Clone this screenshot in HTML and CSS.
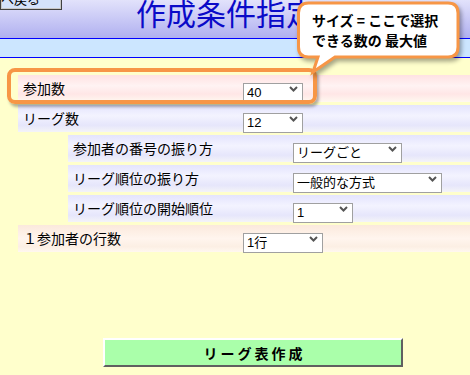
FILE: index.html
```html
<!DOCTYPE html>
<html lang="ja">
<head>
    <meta charset="UTF-8">
    <meta name="viewport" content="width=device-width, initial-scale=1.0">
    <title>作成条件指定</title>
    <link rel="stylesheet" href="styles.css">
</head>
<body>
    <div class="header">
        <button class="back">へ戻る</button>
        <h1 class="title">作成条件指定</h1>
    </div>
    <div class="subbar"></div>

    <div class="form">
        <div class="row pink">
            <div class="label">参加数</div>
            <div class="sel w60">
                <select><option>40</option></select>
                <svg class="chev" width="9" height="6" viewBox="0 0 9 6"><path d="M1 1 L4.5 4.5 L8 1" fill="none" stroke="#555" stroke-width="2"/></svg>
            </div>
        </div>
        <div class="row lav">
            <div class="label">リーグ数</div>
            <div class="sel w60">
                <select><option>12</option></select>
                <svg class="chev" width="9" height="6" viewBox="0 0 9 6"><path d="M1 1 L4.5 4.5 L8 1" fill="none" stroke="#555" stroke-width="2"/></svg>
            </div>
        </div>
        <div class="row lav sub">
            <div class="label">参加者の番号の振り方</div>
            <div class="sel w109">
                <select><option>リーグごと</option></select>
                <svg class="chev" width="9" height="6" viewBox="0 0 9 6"><path d="M1 1 L4.5 4.5 L8 1" fill="none" stroke="#555" stroke-width="2"/></svg>
            </div>
        </div>
        <div class="row lav sub">
            <div class="label">リーグ順位の振り方</div>
            <div class="sel w149">
                <select><option>一般的な方式</option></select>
                <svg class="chev" width="9" height="6" viewBox="0 0 9 6"><path d="M1 1 L4.5 4.5 L8 1" fill="none" stroke="#555" stroke-width="2"/></svg>
            </div>
        </div>
        <div class="row lav sub">
            <div class="label">リーグ順位の開始順位</div>
            <div class="sel w60">
                <select><option>1</option></select>
                <svg class="chev" width="9" height="6" viewBox="0 0 9 6"><path d="M1 1 L4.5 4.5 L8 1" fill="none" stroke="#555" stroke-width="2"/></svg>
            </div>
        </div>
        <div class="row peach">
            <div class="label">１参加者の行数</div>
            <div class="sel w80">
                <select><option>1行</option></select>
                <svg class="chev" width="9" height="6" viewBox="0 0 9 6"><path d="M1 1 L4.5 4.5 L8 1" fill="none" stroke="#555" stroke-width="2"/></svg>
            </div>
        </div>
    </div>

    <div class="actions">
        <button class="make">リーグ表作成</button>
    </div>

    <!-- 吹き出しと強調枠 -->
    <div class="highlight"></div>
    <div class="bubble">
        <svg width="180" height="80" viewBox="0 0 180 80">
            <path d="M18.5 3 H158 Q168 3 168 13 V47 Q168 57 158 57 H45 L23 72 L28 57 H18.5 Q8.5 57 8.5 47 V13 Q8.5 3 18.5 3 Z" fill="#fff" stroke="#f79646" stroke-width="3"/>
        </svg>
        <div class="bubble-text">サイズ = ここで選択<br>できる数の 最大値</div>
    </div>
</body>
</html>
```

FILE: styles.css
```css
* {
    box-sizing: border-box;
}

body {
    margin: 0;
    background-color: #ffffcc;
    font-family: "Noto Sans CJK JP", sans-serif;
    color: #000;
    overflow: hidden;
}

.header {
    height: 39px;
    display: flex;
    align-items: flex-start;
    background: linear-gradient(to bottom, #e2e2fb, #b0b0f0);
    border-bottom: 1px solid #0000ff;
}

.back {
    width: 62px;
    height: 22px;
    margin-top: -12px;
    padding: 0;
    text-align: left;
    font-family: "Noto Sans CJK JP", sans-serif;
    font-size: 13px;
    line-height: 18px;
    background: #d4e2fb;
    border: 1px solid #404040;
    box-shadow: inset 0 0 0 1px #c8c8c8;
    color: #000;
}

.title {
    margin: -3px 0 0 74px;
    font-size: 30px;
    line-height: 30px;
    font-weight: normal;
    color: #0a0ac8;
}

.subbar {
    height: 19px;
    background: #cce6ff;
    border-bottom: 1px solid #0000ff;
}

.form {
    padding: 17px 0 0 18px;
    display: flex;
    flex-direction: column;
    gap: 3px;
}

.row {
    height: 27px;
    display: flex;
    align-items: center;
}

.row.sub {
    margin-left: 50px;
}

.pink {
    background: linear-gradient(to bottom, #ffe2e2 0%, #fff3f3 40%, #ffe6e6 70%, #fff8f0 100%);
}

.lav {
    background: linear-gradient(to bottom, #e4e4fd 0%, #f3f3ff 40%, #e6e6fb 75%, #f4f4f8 100%);
}

.peach {
    background: linear-gradient(to bottom, #fbe9dc 0%, #fff5ee 50%, #fcefe4 80%, #fff8f0 100%);
}

.label {
    width: 225px;
    padding: 0 0 2px 5px;
    font-size: 14px;
    line-height: 20px;
}

.sel {
    position: relative;
    height: 20px;
    margin-bottom: 1px;
}

.sel select {
    appearance: none;
    -webkit-appearance: none;
    width: 100%;
    height: 20px;
    margin: 0;
    padding: 0 0 0 3px;
    border: 1px solid #a0a0a0;
    border-radius: 0;
    background: #fff;
    color: #000;
    font-family: "Liberation Sans", "Noto Sans CJK JP", sans-serif;
    font-size: 13px;
    line-height: 18px;
}

.chev {
    position: absolute;
    right: 5px;
    top: 8px;
    pointer-events: none;
}

.w60 { width: 60px; }
.w80 { width: 80px; }
.w109 { width: 109px; }
.w149 { width: 149px; }

.actions {
    padding: 86px 0 0 103px;
}

.make {
    width: 300px;
    height: 29px;
    background: #aaffaa;
    border: 2px solid;
    border-color: #ffffff #606060 #606060 #ffffff;
    font-family: "Noto Sans CJK JP", sans-serif;
    font-size: 14px;
    font-weight: bold;
    letter-spacing: 3px;
    color: #000;
    padding: 0 0 0 3px;
}

.highlight {
    position: absolute;
    left: 7px;
    top: 68px;
    width: 310px;
    height: 36px;
    border: 4px solid #f79646;
    border-radius: 8px;
    box-shadow: 2px 3px 3px rgba(0, 0, 0, 0.3);
}

.bubble {
    position: absolute;
    left: 290px;
    top: 0;
    width: 180px;
    height: 80px;
}

.bubble svg {
    display: block;
    filter: drop-shadow(2px 3px 2px rgba(0, 0, 0, 0.35));
}

.bubble-text {
    position: absolute;
    left: 22px;
    top: 10px;
    font-size: 14px;
    line-height: 20px;
    font-weight: bold;
    white-space: nowrap;
}
```
